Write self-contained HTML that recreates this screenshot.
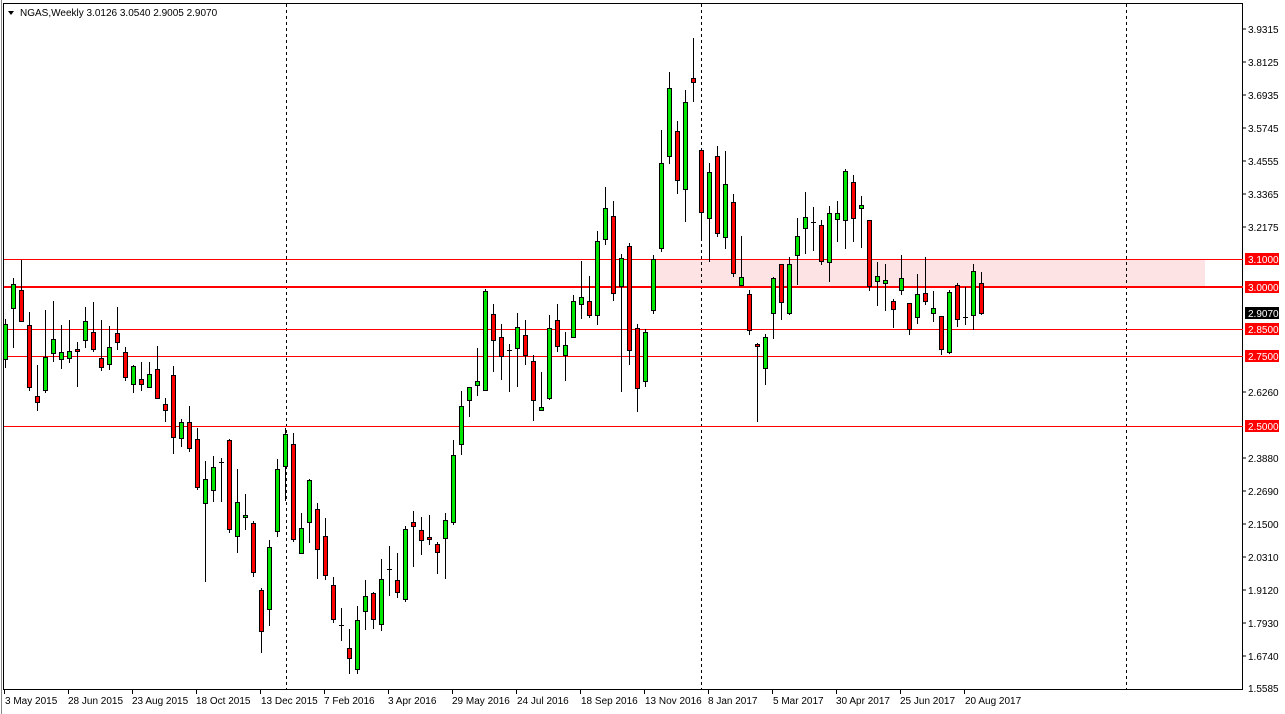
<!DOCTYPE html>
<html><head><meta charset="utf-8"><style>
html,body{margin:0;padding:0;background:#fff;width:1285px;height:714px;overflow:hidden}
svg{display:block}
text{font-family:"Liberation Sans",sans-serif;font-size:10px}
</style></head><body>
<svg id="s" width="1285" height="714" xmlns="http://www.w3.org/2000/svg">
<rect x="0" y="0" width="1285" height="714" fill="#fff"/>
<rect x="3.5" y="3.5" width="1239" height="686" fill="none" stroke="#000" stroke-width="1"/>
<line x1="1.5" y1="0" x2="1.5" y2="714" stroke="#888" stroke-width="1"/>
<rect x="653" y="259" width="552" height="28" fill="#fde3e3"/>
<g stroke="#000" stroke-width="1" stroke-dasharray="3,3">
<line x1="286.5" y1="4" x2="286.5" y2="689"/>
<line x1="701.5" y1="4" x2="701.5" y2="689"/>
<line x1="1126.5" y1="4" x2="1126.5" y2="689"/>
</g>
<g stroke="#f00">
<line x1="4" y1="259.5" x2="1243" y2="259.5" stroke-width="1"/>
<line x1="4" y1="287" x2="1243" y2="287" stroke-width="2"/>
<line x1="4" y1="329.5" x2="1243" y2="329.5" stroke-width="1"/>
<line x1="4" y1="356.5" x2="1243" y2="356.5" stroke-width="1"/>
<line x1="4" y1="426.5" x2="1243" y2="426.5" stroke-width="1"/>
</g>
<g id="c"></g>
<g fill="#000">
<text x="1248" y="33">3.9315</text>
<text x="1248" y="66">3.8125</text>
<text x="1248" y="99">3.6935</text>
<text x="1248" y="132">3.5745</text>
<text x="1248" y="165">3.4555</text>
<text x="1248" y="198">3.3365</text>
<text x="1248" y="231">3.2175</text>
<text x="1248" y="396">2.6260</text>
<text x="1248" y="462">2.3880</text>
<text x="1248" y="495">2.2690</text>
<text x="1248" y="528">2.1500</text>
<text x="1248" y="561">2.0310</text>
<text x="1248" y="594">1.9120</text>
<text x="1248" y="627">1.7930</text>
<text x="1248" y="660">1.6740</text>
<text x="1248" y="692">1.5585</text>
</g>
<g stroke="#000">
<line x1="1243" y1="29" x2="1246" y2="29"/><line x1="1243" y1="62" x2="1246" y2="62"/><line x1="1243" y1="95" x2="1246" y2="95"/><line x1="1243" y1="128" x2="1246" y2="128"/><line x1="1243" y1="161" x2="1246" y2="161"/><line x1="1243" y1="194" x2="1246" y2="194"/><line x1="1243" y1="227" x2="1246" y2="227"/><line x1="1243" y1="392" x2="1246" y2="392"/><line x1="1243" y1="458" x2="1246" y2="458"/><line x1="1243" y1="491" x2="1246" y2="491"/><line x1="1243" y1="524" x2="1246" y2="524"/><line x1="1243" y1="557" x2="1246" y2="557"/><line x1="1243" y1="590" x2="1246" y2="590"/><line x1="1243" y1="623" x2="1246" y2="623"/><line x1="1243" y1="656" x2="1246" y2="656"/>
</g>
<g>
<rect x="1245" y="253" width="34" height="12" fill="#f00"/><text x="1248" y="263" fill="#fff">3.1000</text>
<rect x="1245" y="281" width="34" height="12" fill="#f00"/><text x="1248" y="291" fill="#fff">3.0000</text>
<rect x="1245" y="307" width="34" height="12" fill="#000"/><text x="1248" y="317" fill="#fff">2.9070</text>
<rect x="1245" y="323" width="34" height="12" fill="#f00"/><text x="1248" y="333" fill="#fff">2.8500</text>
<rect x="1245" y="350" width="34" height="12" fill="#f00"/><text x="1248" y="360" fill="#fff">2.7500</text>
<rect x="1245" y="420" width="34" height="12" fill="#f00"/><text x="1248" y="430" fill="#fff">2.5000</text>
</g>
<g fill="#000">
<text x="5" y="704">3 May 2015</text>
<text x="68" y="704">28 Jun 2015</text>
<text x="132" y="704">23 Aug 2015</text>
<text x="196" y="704">18 Oct 2015</text>
<text x="261" y="704">13 Dec 2015</text>
<text x="324" y="704">7 Feb 2016</text>
<text x="388" y="704">3 Apr 2016</text>
<text x="452" y="704">29 May 2016</text>
<text x="517" y="704">24 Jul 2016</text>
<text x="581" y="704">18 Sep 2016</text>
<text x="645" y="704">13 Nov 2016</text>
<text x="708" y="704">8 Jan 2017</text>
<text x="773" y="704">5 Mar 2017</text>
<text x="836" y="704">30 Apr 2017</text>
<text x="900" y="704">25 Jun 2017</text>
<text x="965" y="704">20 Aug 2017</text>
</g>
<g stroke="#000">
<line x1="4.5" y1="690" x2="4.5" y2="694"/><line x1="68.5" y1="690" x2="68.5" y2="694"/><line x1="132.5" y1="690" x2="132.5" y2="694"/><line x1="196.5" y1="690" x2="196.5" y2="694"/><line x1="260.5" y1="690" x2="260.5" y2="694"/><line x1="324.5" y1="690" x2="324.5" y2="694"/><line x1="388.5" y1="690" x2="388.5" y2="694"/><line x1="452.5" y1="690" x2="452.5" y2="694"/><line x1="516.5" y1="690" x2="516.5" y2="694"/><line x1="580.5" y1="690" x2="580.5" y2="694"/><line x1="644.5" y1="690" x2="644.5" y2="694"/><line x1="708.5" y1="690" x2="708.5" y2="694"/><line x1="772.5" y1="690" x2="772.5" y2="694"/><line x1="836.5" y1="690" x2="836.5" y2="694"/><line x1="900.5" y1="690" x2="900.5" y2="694"/><line x1="964.5" y1="690" x2="964.5" y2="694"/>
</g>
<path d="M8 11 L14 11 L11 15 Z" fill="#000"/>
<text x="20" y="16" fill="#000">NGAS,Weekly  3.0126 3.0540 2.9005 2.9070</text>
</svg>
<script>
var d=[
[319,324,359,368,'g'],[278,284,308,348,'g'],[260,290,321,322,'r'],[312,325,387,391,'r'],[365,396,402,411,'r'],[310,357,390,393,'g'],[301,339,353,362,'g'],[325,352,359,369,'g'],[320,351,358,363,'g'],[342,349,351,387,'r'],
[307,321,340,348,'g'],[302,332,349,352,'r'],[320,358,367,371,'r'],[326,347,364,370,'g'],[307,333,342,350,'r'],[347,352,377,381,'r'],[365,366,384,393,'g'],[362,379,384,391,'r'],[362,374,387,388,'g'],[346,369,398,398,'r'],
[398,404,410,422,'r'],[366,375,437,454,'r'],[419,422,438,447,'g'],[406,422,448,452,'r'],[428,439,487,490,'r'],[461,479,503,582,'g'],[456,467,490,502,'g'],[458,462,462,502,'d'],[439,440,529,533,'r'],[469,502,536,553,'g'],
[494,515,517,530,'g'],[521,523,572,577,'r'],[588,590,631,653,'r'],[540,547,609,626,'g'],[459,469,531,537,'g'],[428,434,466,501,'g'],[433,444,539,542,'r'],[513,528,553,554,'g'],[479,480,522,543,'g'],[503,509,549,579,'r'],
[518,536,575,580,'r'],[577,585,619,623,'r'],[608,625,625,641,'d'],[629,648,658,674,'r'],[606,620,669,674,'g'],[580,596,611,630,'g'],[592,593,619,629,'r'],[559,579,624,631,'g'],[546,569,570,596,'d'],[553,580,592,598,'r'],
[526,529,599,602,'g'],[511,522,526,567,'r'],[517,530,540,555,'r'],[515,537,539,545,'r'],[542,544,552,574,'r'],[513,520,538,579,'g'],[440,455,522,525,'g'],[391,406,444,455,'g'],[387,387,400,417,'g'],[348,381,385,396,'g'],
[289,291,390,390,'g'],[304,314,340,372,'r'],[324,337,356,380,'r'],[344,350,350,392,'d'],[313,327,348,387,'g'],[320,335,355,365,'r'],[355,361,400,421,'r'],[372,407,410,410,'g'],[315,328,398,400,'g'],[304,320,346,352,'r'],
[332,345,355,381,'g'],[295,301,337,337,'g'],[261,297,304,319,'g'],[276,301,315,318,'r'],[231,241,315,325,'g'],[187,208,239,245,'g'],[201,216,293,301,'r'],[254,258,286,392,'g'],[243,246,350,365,'r'],[324,328,388,412,'r'],
[329,332,381,387,'g'],[255,259,310,314,'g'],[130,163,248,252,'g'],[72,88,156,164,'g'],[121,131,180,194,'r'],[90,102,189,222,'g'],[38,78,82,102,'r'],[149,150,212,241,'r'],[163,172,218,262,'g'],[146,156,233,237,'r'],
[151,184,237,249,'g'],[194,202,273,277,'r'],[236,277,285,285,'g'],[290,294,330,335,'r'],[343,344,346,422,'r'],[334,337,368,385,'g'],[277,278,313,339,'g'],[264,264,302,320,'r'],[257,264,313,315,'g'],[218,236,255,285,'g'],
[192,217,228,254,'g'],[207,222,222,251,'d'],[220,225,261,265,'r'],[206,213,262,282,'g'],[201,213,219,242,'g'],[169,171,220,249,'g'],[175,182,218,242,'r'],[196,205,208,248,'g'],[220,220,286,291,'r'],[262,276,281,306,'g'],
[264,280,283,311,'g'],[299,301,309,328,'r'],[255,278,290,295,'g'],[303,303,329,335,'r'],[274,294,317,324,'g'],[257,293,301,305,'r'],[291,308,313,322,'g'],[316,316,349,355,'r'],[290,292,352,354,'g'],[283,285,319,327,'r'],
[287,317,317,325,'d'],[264,271,315,330,'g'],[272,283,313,315,'r']];
var s='';
for(var i=0;i<d.length;i++){var c=d[i],x=5+8*i;
s+='<line x1="'+(x+0.5)+'" y1="'+c[0]+'" x2="'+(x+0.5)+'" y2="'+c[3]+'" stroke="#000" stroke-width="1"/>';
if(c[4]=='d'){s+='<line x1="'+(x-2)+'" y1="'+(c[1]+0.5)+'" x2="'+(x+3)+'" y2="'+(c[1]+0.5)+'" stroke="#000" stroke-width="1"/>';}
else{var h=Math.max(c[2]-c[1],2);s+='<rect x="'+(x-1.5)+'" y="'+(c[1]+0.5)+'" width="4" height="'+h+'" fill="'+(c[4]=='g'?'#00e600':'#f00')+'" stroke="#000" stroke-width="1"/>';}
}
document.getElementById('c').innerHTML=s;
</script>
</body></html>
